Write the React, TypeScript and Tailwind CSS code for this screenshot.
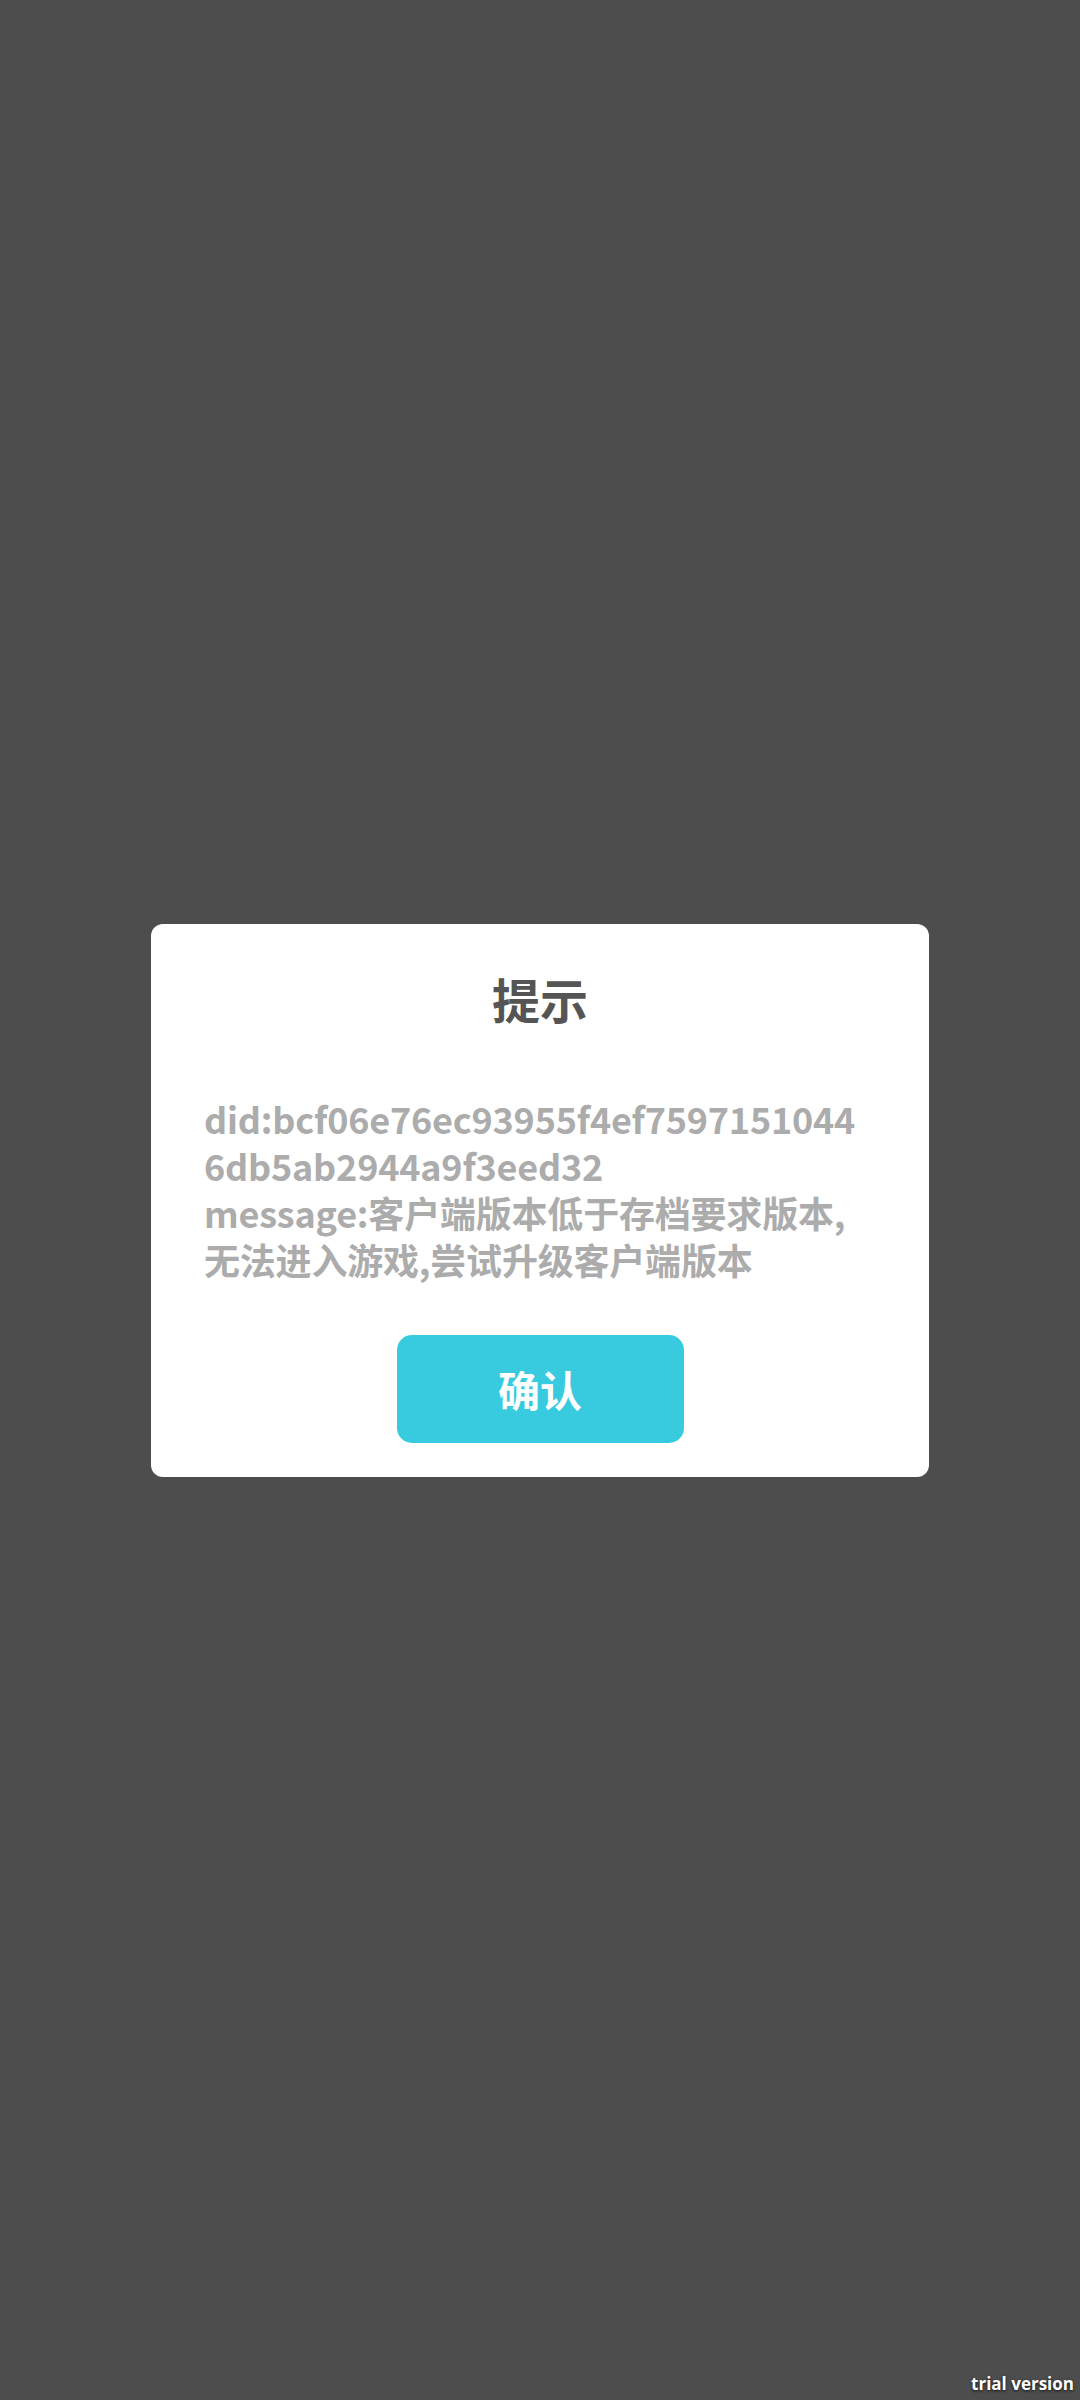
import React from "react";

const font = { fontFamily: '"Noto Sans CJK SC", "Noto Sans", sans-serif' };

export default function App() {
  return (
    <main
      className="relative flex h-[2400px] w-full items-center justify-center bg-[#4d4d4d]"
      style={font}
    >
      {/* dialog */}
      <div className="flex w-[778px] flex-col items-center rounded-[12px] bg-white px-[53px] pt-[46px] pb-[34px]">
        <h1 className="text-[48px] font-bold leading-[56px] text-[#555555]">提示</h1>

        <p className="mt-[69px] w-full text-[36px] font-semibold leading-[47px] tracking-[-0.2px] text-[#acacac] whitespace-nowrap">
          did:bcf06e76ec93955f4ef7597151044
          <br />
          6db5ab2944a9f3eed32
          <br />
          message:客户端版本低于存档要求版本,
          <br />
          无法进入游戏,尝试升级客户端版本
        </p>

        <button className="mt-[52px] flex h-[108px] w-[287px] items-center justify-center rounded-[15px] bg-[#38cadf] text-[42px] font-bold text-white">
          确认
        </button>
      </div>

      {/* watermark */}
      <span
        className="absolute right-[6px] bottom-[4px] text-[17px] font-bold text-white [text-shadow:0_1px_3px_rgba(0,0,0,0.8)]"
        style={{ fontFamily: '"Open Sans", sans-serif' }}
      >
        trial version
      </span>
    </main>
  );
}
